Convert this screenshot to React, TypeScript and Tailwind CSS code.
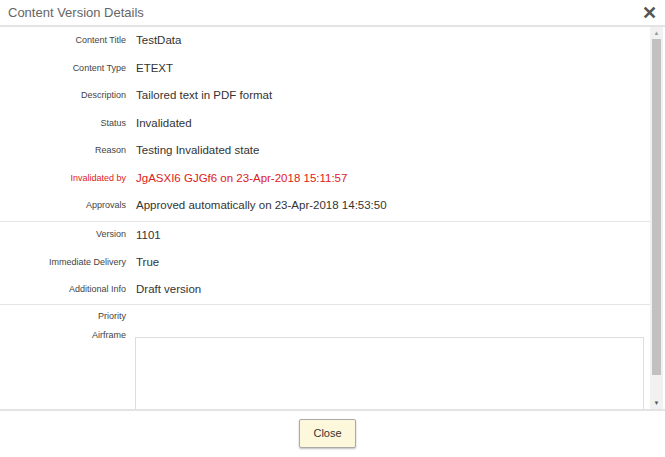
const rows1 = [
  ["Content Title", "TestData"],
  ["Content Type", "ETEXT"],
  ["Description", "Tailored text in PDF format"],
  ["Status", "Invalidated"],
  ["Reason", "Testing Invalidated state"],
  ["Invalidated by", "JgASXI6 GJGf6 on 23-Apr-2018 15:11:57"],
  ["Approvals", "Approved automatically on 23-Apr-2018 14:53:50"],
];
const rows2 = [
  ["Version", "1101"],
  ["Immediate Delivery", "True"],
  ["Additional Info", "Draft version"],
];

function Row({ label, value, red }: { label: string; value: string; red?: boolean }) {
  return (
    <div className="flex items-center h-[27.5px]">
      <div className={`w-[126px] text-right text-[9px] ${red ? "text-[#e02020]" : "text-[#444]"}`}>{label}</div>
      <div className={`ml-[10px] text-[11.5px] ${red ? "text-[#e02020]" : "text-[#333]"}`}>{value}</div>
    </div>
  );
}

export default function App() {
  return (
    <div className="w-[665px] h-[457px] bg-white flex flex-col overflow-hidden" style={{ fontFamily: '"Liberation Sans", Arial, sans-serif' }}>
      <div className="h-[27px] flex items-center justify-between px-[8px] border-b-2 border-[#e3e3e3]">
        <span className="text-[13px] text-[#666]">Content Version Details</span>
        <span className="text-[18px] font-bold text-[#555] leading-none">✕</span>
      </div>
      <div className="flex h-[382px]">
        <div className="flex-1 flex flex-col">
          <div className="pb-[1px]">
            {rows1.map(([l, v]) => (
              <Row key={l} label={l} value={v} red={l === "Invalidated by"} />
            ))}
          </div>
          <div className="border-t border-[#e6e6e6] h-[83px] flex flex-col justify-center">
            {rows2.map(([l, v]) => (
              <Row key={l} label={l} value={v} />
            ))}
          </div>
          <div className="border-t border-[#e6e6e6] flex-1 flex flex-col">
            <div className="flex items-center h-[24px]">
              <div className="w-[126px] text-right text-[9px] text-[#444]">Priority</div>
            </div>
            <div className="flex flex-1">
              <div className="w-[126px] text-right text-[9px] text-[#444] pt-[0px]">Airframe</div>
              <div className="ml-[9px] mr-[6px] mt-[8px] flex-1 border border-[#ddd] border-b-0" />
            </div>
          </div>
        </div>
        <div className="w-[13px] bg-[#f1f1f1] flex flex-col items-center mr-[2px]">
          <span className="text-[6px] text-[#999] h-[12px] leading-[12px]">▲</span>
          <div className="w-[9px] flex-1 bg-[#c1c1c1] mb-[22px]" />
          <span className="text-[6px] text-[#555] h-[12px] leading-[12px]">▼</span>
        </div>
      </div>
      <div className="flex-1 border-t-2 border-[#e3e3e3] flex justify-center pt-[8px] pr-[10px]">
        <button className="w-[57px] h-[29px] bg-[#fdf7dc] border border-[#aaa] rounded-[2px] shadow-[0_1px_2px_rgba(0,0,0,0.25)] text-[11px] text-[#333]">Close</button>
      </div>
    </div>
  );
}
